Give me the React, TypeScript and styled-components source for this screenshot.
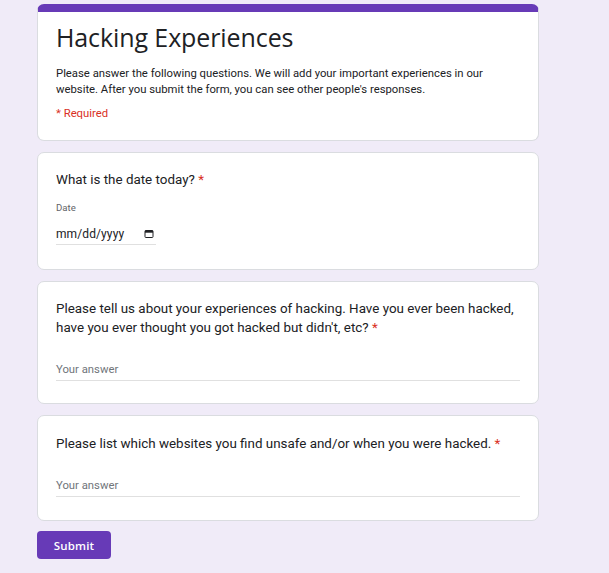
import React from "react";
import styled, { createGlobalStyle } from "styled-components";

const Global = createGlobalStyle`
  html, body { margin: 0; padding: 0; background: #f0ebf8; }
  body { font-family: Roboto, "Liberation Sans", Arial, sans-serif; }
`;

const Page = styled.div`
  width: 609px;
  min-height: 573px;
  box-sizing: border-box;
  padding: 4px 0 0 37px;
  background: #f0ebf8;
`;

const Column = styled.div`
  width: 502px;
  display: flex;
  flex-direction: column;
  gap: 11px;
`;

const Card = styled.div<{ $height: number; $header?: boolean }>`
  box-sizing: border-box;
  height: ${(p) => p.$height}px;
  background: #fff;
  border: 1px solid #dadce0;
  border-radius: 7px;
  padding: 0 18px;
  overflow: hidden;
  ${(p) => p.$header && `border-top: 8px solid #673ab7;`}
`;

const Title = styled.h1`
  margin: 8px 0 0;
  font-family: "Open Sans", Roboto, sans-serif;
  font-weight: 400;
  font-size: 25px;
  line-height: 34px;
  color: #202124;
  letter-spacing: -0.1px;
`;

const Description = styled.p`
  margin: 12px 0 0;
  font-size: 11.3px;
  line-height: 16px;
  color: #202124;
`;

const RequiredNote = styled.div`
  margin-top: 8px;
  font-size: 11.3px;
  line-height: 16px;
  color: #d93025;
`;

const Question = styled.div<{ $top: number }>`
  margin-top: ${(p) => p.$top}px;
  font-family: Roboto, "Open Sans", sans-serif;
  font-size: 13.4px;
  line-height: 19px;
  color: #202124;
`;

const QuestionLine = styled.div`
  white-space: nowrap;
`;

const Star = styled.span`
  color: #d93025;
`;

const SmallLabel = styled.div`
  margin-top: 12px;
  font-size: 9.6px;
  line-height: 14px;
  color: #5f6368;
`;

const DateField = styled.div`
  margin-top: 11px;
  width: 100px;
  height: 19px;
  box-sizing: border-box;
  border-bottom: 1px solid #e0e0e0;
  display: flex;
  align-items: flex-start;
  justify-content: space-between;
  padding-right: 2px;
`;

const DateText = styled.span`
  font-size: 12px;
  line-height: 16px;
  color: #202124;
  letter-spacing: 0.1px;
`;

const AnswerLine = styled.div<{ $top: number }>`
  margin-top: ${(p) => p.$top}px;
  height: 19px;
  box-sizing: border-box;
  border-bottom: 1px solid #e0e0e0;
  font-size: 11.3px;
  line-height: 16px;
  color: #70757a;
`;

const SubmitButton = styled.button`
  margin-top: 10px;
  width: 74px;
  height: 28px;
  border: none;
  border-radius: 4px;
  background: #673ab7;
  color: #fff;
  font-family: "Open Sans", Roboto, sans-serif;
  font-weight: 600;
  font-size: 11.5px;
  letter-spacing: 0.2px;
  padding: 0;
`;

const CalendarIcon = () => (
  <svg width="10" height="10" viewBox="0 0 10 10" style={{ marginTop: 3 }}>
    <rect x="1" y="1.5" width="8" height="7" rx="0.8" fill="none" stroke="#202124" strokeWidth="1" />
    <rect x="1" y="1.5" width="8" height="2.2" fill="#202124" />
  </svg>
);

export default function App() {
  return (
    <>
      <Global />
      <Page>
        <Column>
          <Card $height={137} $header>
            <Title>Hacking Experiences</Title>
            <Description>
              Please answer the following questions. We will add your important experiences in our
              website. After you submit the form, you can see other people's responses.
            </Description>
            <RequiredNote>* Required</RequiredNote>
          </Card>
          <Card $height={118}>
            <Question $top={17}>
              What is the date today? <Star>*</Star>
            </Question>
            <SmallLabel>Date</SmallLabel>
            <DateField>
              <DateText>mm/dd/yyyy</DateText>
              <CalendarIcon />
            </DateField>
          </Card>
          <Card $height={123}>
            <Question $top={17}>
              <QuestionLine>
                Please tell us about your experiences of hacking. Have you ever been hacked,
              </QuestionLine>
              <QuestionLine>
                have you ever thought you got hacked but didn't, etc? <Star>*</Star>
              </QuestionLine>
            </Question>
            <AnswerLine $top={25}>Your answer</AnswerLine>
          </Card>
          <Card $height={106}>
            <Question $top={18}>
              Please list which websites you find unsafe and/or when you were hacked. <Star>*</Star>
            </Question>
            <AnswerLine $top={25}>Your answer</AnswerLine>
          </Card>
        </Column>
        <SubmitButton>Submit</SubmitButton>
      </Page>
    </>
  );
}
